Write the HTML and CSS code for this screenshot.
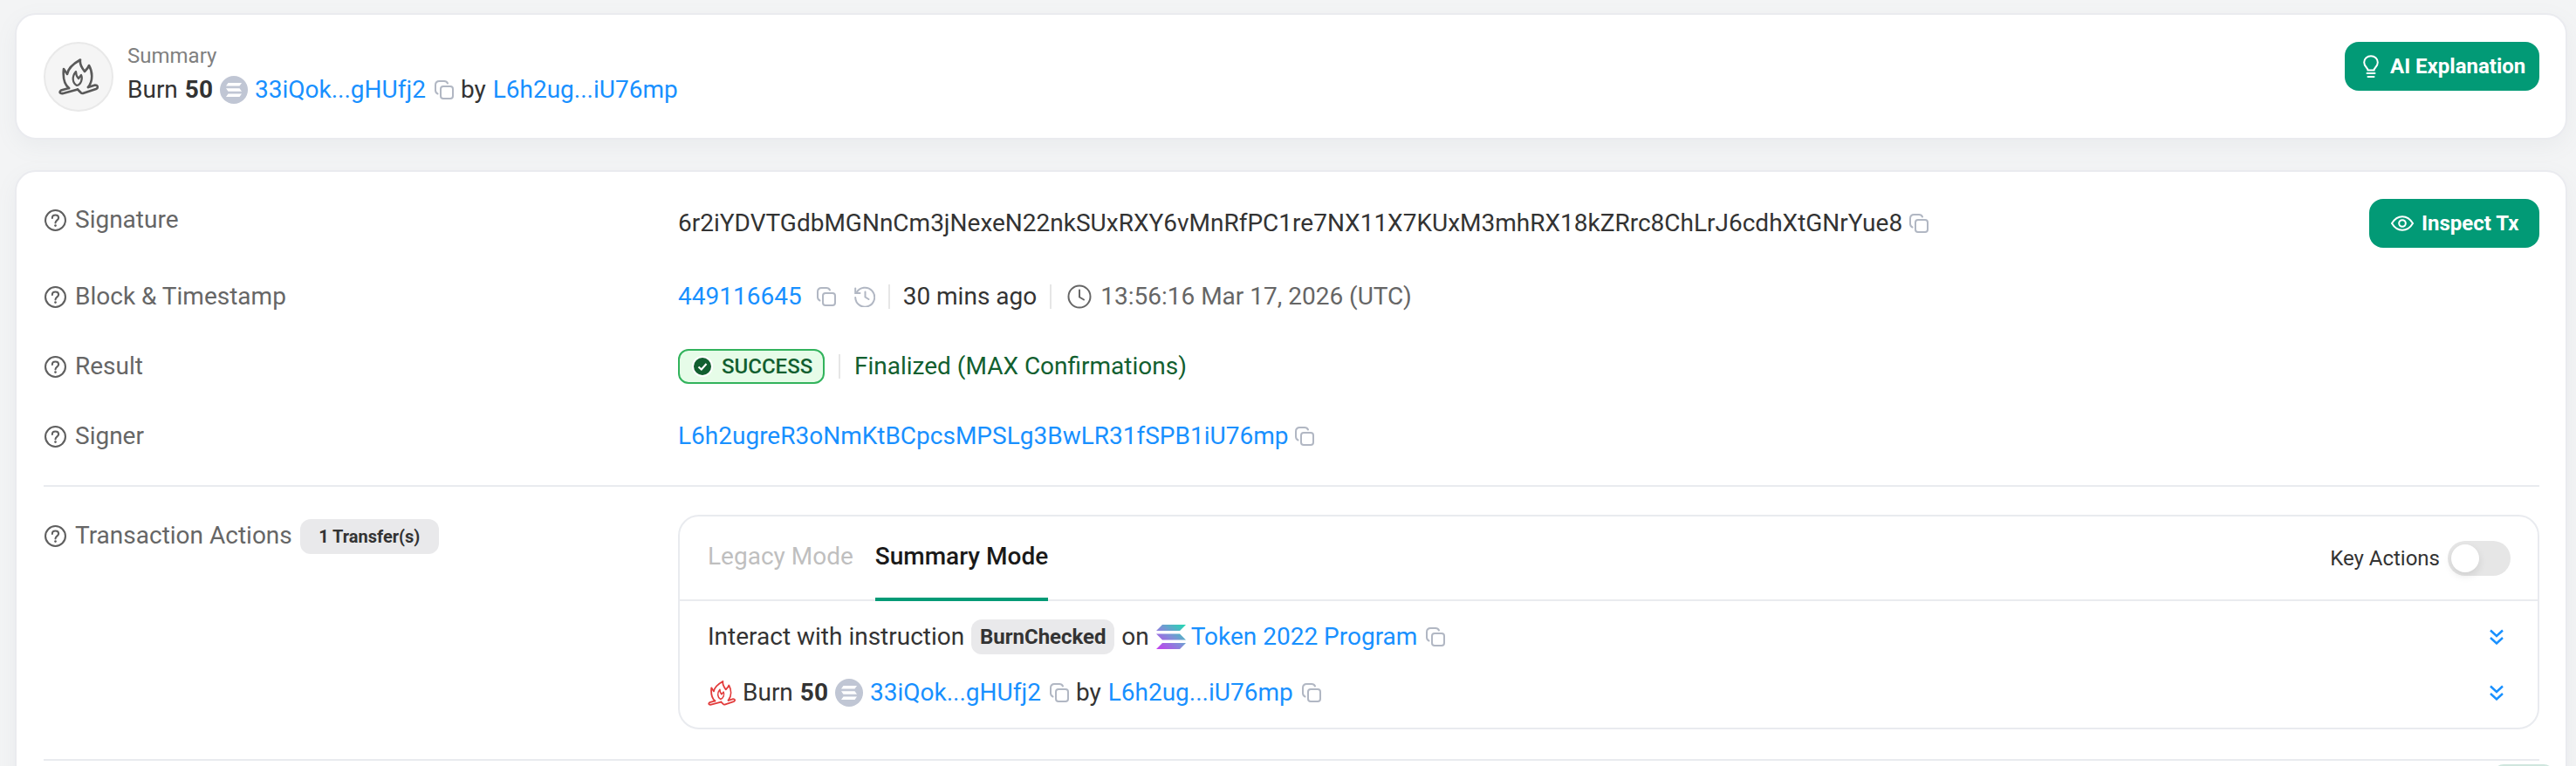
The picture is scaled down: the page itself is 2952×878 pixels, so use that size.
FILE: index.html
```html
<!DOCTYPE html>
<html lang="en">
<head>
<meta charset="utf-8">
<title>Transaction Summary</title>
<link rel="stylesheet" href="styles.css">
</head>
<body>
<svg class="defs" width="0" height="0" aria-hidden="true">
  <defs>
    <linearGradient id="sol" x1="0" y1="1" x2="1" y2="0">
      <stop offset="0" stop-color="#c63bf0"/>
      <stop offset="0.5" stop-color="#7f8fd8"/>
      <stop offset="1" stop-color="#1fdcb0"/>
    </linearGradient>
    <symbol id="flame" viewBox="0 0 46 42">
      <g fill="none" stroke="currentColor" stroke-width="2.600" stroke-linejoin="round" stroke-linecap="round">
        <path d="M12 34C6 29 5 21 6 12L10 18C11 11 17 6 25 1.500C24 7 27 11 30 15C32 13 34 11 35 8C39 15 40 25 34 33"/>
        <path d="M20 15C15 21 16 28 21 31C26 30 28 23 26 19L23 23C21 21 20 19 20 15Z" stroke-width="2.200"/>
        <path d="M12 34L3 36.500Q1 38 2 39.500Q3.500 40.500 5.500 40L22 35.500"/>
        <path d="M34 33L42 30.500Q44.500 30.500 45 32.500Q45 34 43 35L28 40Q26.500 40.300 25.500 39L22 35.500"/>
      </g>
    </symbol>
    <symbol id="copy" viewBox="0 0 22 22">
      <g fill="none" stroke="currentColor" stroke-width="2">
        <rect x="7" y="7" width="14" height="14" rx="3"/>
        <path d="M3.500 15.500C2 14.800 1 13.500 1 11.500V5.500C1 2.800 2.800 1 5.500 1H11C13 1 14.300 1.800 15 3.500" stroke-linecap="round"/>
      </g>
    </symbol>
    <symbol id="help" viewBox="0 0 24 24">
      <circle cx="12" cy="12" r="11" fill="none" stroke="currentColor" stroke-width="2"/>
      <path d="M8.500 9.500C8.500 7.500 10 6.200 12 6.200S15.500 7.500 15.500 9.300C15.500 11.800 12 12 12 14.800" fill="none" stroke="currentColor" stroke-width="2" stroke-linecap="round"/>
      <circle cx="12" cy="17.800" r="1.300" fill="currentColor"/>
    </symbol>
    <symbol id="token" viewBox="0 0 32 32">
      <circle cx="16" cy="16" r="16" fill="#c0c6d4"/>
      <path d="M9.500 8H25L22.500 11.500H7ZM7 14.200H22.500L25 17.800H9.500ZM9.500 20.500H25L22.500 24H7Z" fill="#fff"/>
    </symbol>
    <symbol id="chev" viewBox="0 0 16 18">
      <path d="M1 1.500L8 8L15 1.500M1 10L8 16.500L15 10" fill="none" stroke="currentColor" stroke-width="2.400"/>
    </symbol>
  </defs>
</svg>

<main class="page">
  <section class="card summary">
    <div class="flame-circle"><svg class="flame-lg"><use href="#flame"/></svg></div>
    <div class="summary-text">
      <div class="summary-title">Summary</div>
      <div class="inline">
        <span>Burn</span><b>50</b>
        <svg class="token"><use href="#token"/></svg>
        <a class="link">33iQok...gHUfj2</a>
        <svg class="copy"><use href="#copy"/></svg>
        <span>by</span>
        <a class="link">L6h2ug...iU76mp</a>
      </div>
    </div>
    <button class="btn btn-ai">
      <svg class="bulb" viewBox="0 0 18 26"><g fill="none" stroke="currentColor" stroke-width="2" stroke-linecap="round"><path d="M5.500 17.500C5.500 14.500 1.200 13.500 1.200 8.500C1.200 4.200 4.700 1.200 9 1.200S16.800 4.200 16.800 8.500C16.800 13.500 12.500 14.500 12.500 17.500Z"/><path d="M4.500 21H13.500M5.500 25H12.500"/></g></svg>
      AI Explanation
    </button>
  </section>

  <section class="card details">
    <div class="row row-sig">
      <div class="label"><svg class="help"><use href="#help"/></svg>Signature</div>
      <div class="value">
        <span>6r2iYDVTGdbMGNnCm3jNexeN22nkSUxRXY6vMnRfPC1re7NX11X7KUxM3mhRX18kZRrc8ChLrJ6cdhXtGNrYue8</span>
        <svg class="copy"><use href="#copy"/></svg>
      </div>
      <button class="btn btn-inspect">
        <svg class="eye" viewBox="0 0 26 18"><path d="M1 9C4 4 8 1.200 13 1.200S22 4 25 9C22 14 18 16.800 13 16.800S4 14 1 9Z" fill="none" stroke="currentColor" stroke-width="2"/><circle cx="13" cy="9" r="3.800" fill="none" stroke="currentColor" stroke-width="2"/></svg>
        Inspect Tx
      </button>
    </div>
    <div class="row">
      <div class="label"><svg class="help"><use href="#help"/></svg>Block &amp; Timestamp</div>
      <div class="value">
        <a class="link">449116645</a>
        <svg class="copy copy-block"><use href="#copy"/></svg>
        <svg class="history" viewBox="0 0 24 24"><g fill="none" stroke="currentColor" stroke-width="2" stroke-linecap="round"><path d="M2.500 7.500A11 11 0 1 1 1.200 13"/><path d="M1.200 2.500V8H6.500"/><path d="M12.500 6.500V12.500L16.500 15"/></g></svg>
        <i class="sep"></i>
        <span>30 mins ago</span>
        <i class="sep"></i>
        <svg class="clock" viewBox="0 0 28 28"><circle cx="14" cy="14" r="12.500" fill="none" stroke="currentColor" stroke-width="2"/><path d="M14 6.500V14.500L19 17.500" fill="none" stroke="currentColor" stroke-width="2" stroke-linecap="round"/></svg>
        <span class="muted">13:56:16 Mar 17, 2026 (UTC)</span>
      </div>
    </div>
    <div class="row">
      <div class="label"><svg class="help"><use href="#help"/></svg>Result</div>
      <div class="value">
        <span class="success">
          <svg class="check" viewBox="0 0 24 24"><circle cx="12" cy="12" r="11" fill="#125f30" stroke="#fff" stroke-width="2"/><path d="M7.500 12.500L10.800 15.500L16.500 9" fill="none" stroke="#fff" stroke-width="2.200"/></svg>
          SUCCESS
        </span>
        <i class="sep sep-result"></i>
        <span class="final">Finalized (MAX Confirmations)</span>
      </div>
    </div>
    <div class="row row-last">
      <div class="label"><svg class="help"><use href="#help"/></svg>Signer</div>
      <div class="value">
        <a class="link">L6h2ugreR3oNmKtBCpcsMPSLg3BwLR31fSPB1iU76mp</a>
        <svg class="copy"><use href="#copy"/></svg>
      </div>
    </div>
    <hr class="rule">
    <div class="row row-actions">
      <div class="label label-actions"><svg class="help"><use href="#help"/></svg>Transaction Actions<span class="tag tag-transfer">1 Transfer(s)</span></div>
      <div class="actions">
        <div class="tabs">
          <span class="tab">Legacy Mode</span>
          <span class="tab tab-on">Summary Mode</span>
          <div class="key">
            <span>Key Actions</span>
            <span class="switch"><span class="knob"></span></span>
          </div>
        </div>
        <div class="action">
          <div class="inline">
            <span>Interact with instruction</span>
            <span class="tag">BurnChecked</span>
            <span>on</span>
            <svg class="sol" viewBox="0 0 34 28"><path d="M7 0H34L27 7H0ZM0 10.500H27L34 17.500H7ZM7 21H34L27 28H0Z" fill="url(#sol)"/></svg>
            <a class="link">Token 2022 Program</a>
            <svg class="copy"><use href="#copy"/></svg>
          </div>
          <svg class="chev"><use href="#chev"/></svg>
        </div>
        <div class="action action-burn">
          <div class="inline">
            <svg class="flame-sm"><use href="#flame"/></svg>
            <span>Burn</span><b>50</b>
            <svg class="token"><use href="#token"/></svg>
            <a class="link">33iQok...gHUfj2</a>
            <svg class="copy"><use href="#copy"/></svg>
            <span>by</span>
            <a class="link">L6h2ug...iU76mp</a>
            <svg class="copy"><use href="#copy"/></svg>
          </div>
          <svg class="chev"><use href="#chev"/></svg>
        </div>
      </div>
    </div>
    <hr class="rule rule-end">
    <div class="tail"><span class="tail-pill"></span></div>
  </section>
</main>
</body>
</html>
```

FILE: styles.css
```css
* { box-sizing: border-box; }
html, body { margin: 0; height: 878px; overflow: hidden; }
body {
  background: #f3f4f5;
  color: #333;
  font-family: Roboto, "Liberation Sans", sans-serif;
  font-size: 28px;
  line-height: 40px;
}
.defs { position: absolute; }
.page { padding: 15px 10px 0 17px; display: flex; flex-direction: column; gap: 35px; }
.card {
  background: #fff;
  border: 2px solid #eaebef;
  border-radius: 24px;
  padding: 31px 30px 30px 31px;
  box-shadow: 0 8px 24px rgba(130, 135, 150, 0.08);
}
.summary { display: flex; align-items: flex-start; }
.flame-circle {
  width: 80px; height: 80px; flex: none;
  border-radius: 50%;
  background: #f5f5f5;
  border: 2px solid #e9e9e9;
  display: flex; align-items: center; justify-content: center;
  color: #595959;
}
.flame-lg { width: 46px; height: 42px; }
.summary-text { margin-left: 16px; flex: 1; }
.summary-title { font-size: 24px; line-height: 32px; color: #808080; margin-bottom: 3px; }
.inline { display: flex; align-items: center; gap: 8px; white-space: nowrap; }
b { font-weight: 700; }
.link { color: #1890ff; }
.muted { color: #666; }
.token { width: 32px; height: 32px; flex: none; }
.copy { width: 22px; height: 22px; flex: none; color: #b1b7c3; margin-left: 2px; }
.btn {
  background: #029a76;
  color: #fff;
  border: 0;
  border-radius: 16px;
  height: 56px;
  font: 700 24px/56px Roboto, "Liberation Sans", sans-serif;
  display: flex; align-items: center;
  flex: none;
}
.btn-ai { width: 223px; padding-left: 21px; }
.bulb { width: 18px; height: 26px; margin-right: 13px; }
.btn-inspect { width: 195px; padding-left: 25px; margin-left: auto; }
.eye { width: 26px; height: 18px; margin-right: 9px; }
.details { padding-bottom: 0; height: 900px; }
.row { display: flex; margin-bottom: 40px; }
.row-sig { margin-bottom: 36px; align-items: center; }
.row-last { margin-bottom: 36px; }
.row-actions { margin-bottom: 34px; }
.label {
  width: 727px; flex: none;
  color: #666;
  display: flex; align-items: center;
}
.row-sig .label { align-self: flex-start; margin-top: 4px; }
.label-actions { align-self: flex-start; margin-top: 3px; }
.help { width: 25px; height: 25px; margin: 0 10px 0 1px; flex: none; color: #5f5f5f; }
.value { display: flex; align-items: center; gap: 8px; white-space: nowrap; }
.value .copy { margin-left: 0; }
.value .copy-block { margin-left: 9px; }
.history { width: 24px; height: 24px; color: #b1b7c3; margin-left: 13px; }
.clock { width: 28px; height: 28px; color: #666; margin: 0 2px 0 3px; }
.sep { width: 2px; height: 28px; background: #e6e6e6; margin: 0 7px; flex: none; }
.sep-result { margin: 0 8px; }
.success {
  height: 40px; width: 168px;
  background: #e6fce8;
  border: 2px solid #32b35c;
  border-radius: 12px;
  color: #125f30;
  font-size: 24px; font-weight: 500; line-height: 36px;
  display: flex; align-items: center; padding-left: 14px; gap: 10px;
}
.check { width: 24px; height: 24px; flex: none; }
.final { color: #125f30; }
.rule { border: 0; height: 2px; background: #e9ebef; margin: 0 0 32px; }
.rule-end { margin: 0; }
.tag {
  height: 40px; display: inline-flex; align-items: center; justify-content: center;
  background: #e9e9eb; color: #333;
  border-radius: 12px; width: 164px;
  font-size: 24px; font-weight: 700;
}
.tag-transfer { font-size: 20px; margin-left: 9px; width: 159px; margin-top: 2px; }
.actions {
  flex: 1;
  height: 246px;
  border: 2px solid #e9ebef;
  border-radius: 24px;
}
.tabs {
  height: 97px;
  border-bottom: 2px solid #e9ebef;
  display: flex; align-items: stretch;
  padding: 0 32px;
  gap: 25px;
}
.tab { color: #bfbfbf; line-height: 92px; height: 95px; }
.tab-on { color: #1a1a1a; font-weight: 500; border-bottom: 4px solid #029a76; height: 97px; }
.key { margin-left: auto; display: flex; align-items: center; gap: 9px; font-size: 24px; }
.switch {
  width: 72px; height: 40px; border-radius: 20px; background: #e6e6e6;
  display: block; padding: 4px;
  margin-right: -1px;
}
.knob { display: block; width: 32px; height: 32px; border-radius: 50%; background: #fff; box-shadow: 0 4px 10px rgba(0, 0, 0, 0.1); }
.action { display: flex; align-items: center; justify-content: space-between; padding: 21px 39px 0 32px; }
.action-burn { padding-top: 24px; }
.chev { width: 16px; height: 18px; color: #1890ff; flex: none; }
.sol { width: 34px; height: 28px; flex: none; margin-right: -2px; }
.flame-sm { width: 32px; height: 29px; color: #e23b3b; }
.tail { display: flex; justify-content: flex-end; margin: 4px -17px 0 0; }
.tail-pill { width: 70px; height: 40px; border: 2px solid #cfe6de; border-radius: 12px; }
```
